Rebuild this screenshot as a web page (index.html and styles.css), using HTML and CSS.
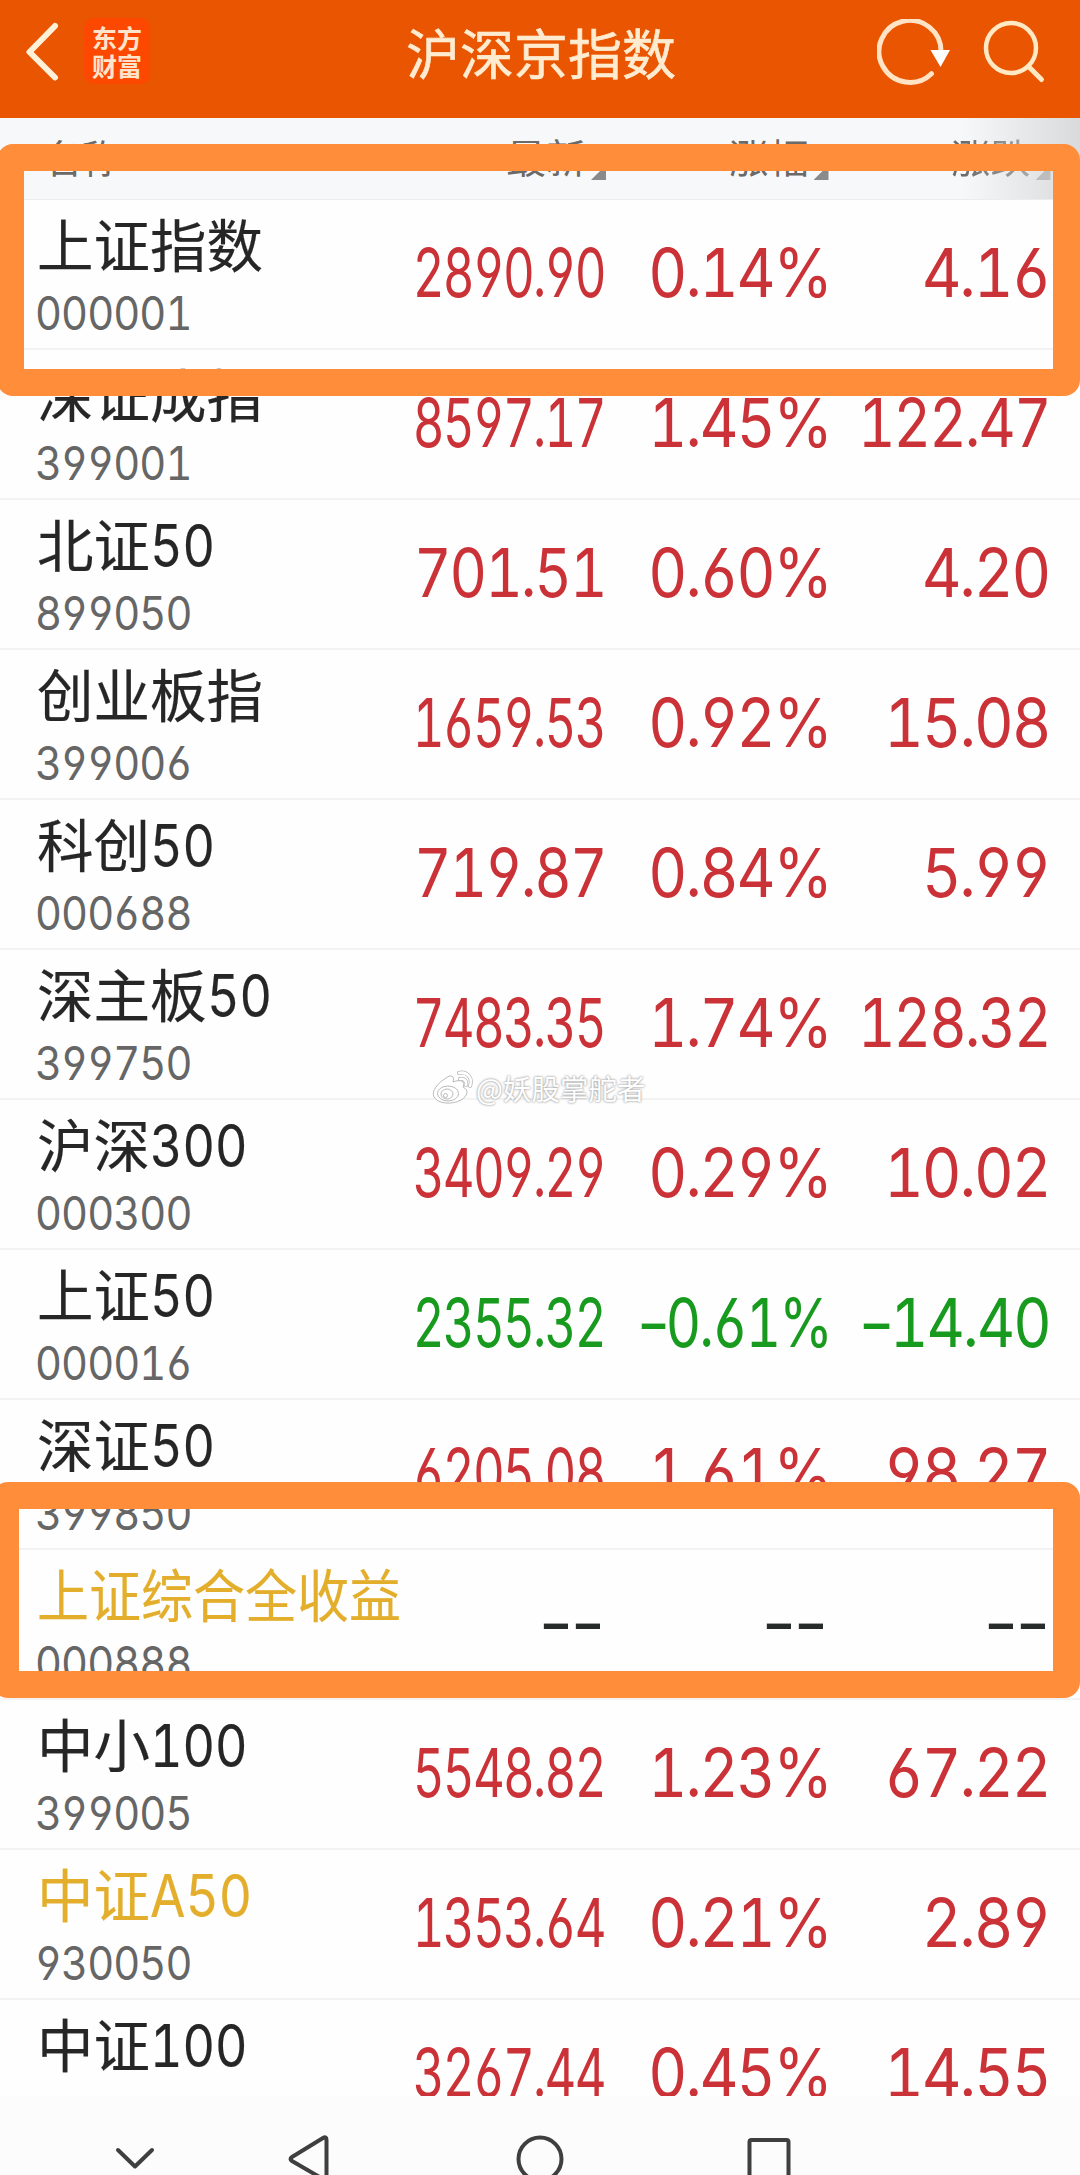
FILE: index.html
```html
<!DOCTYPE html>
<html lang="zh-CN">
<head>
<meta charset="utf-8">
<title>沪深京指数</title>
<link rel="stylesheet" href="styles.css">
</head>
<body>
<div class="screen">
  <header class="topbar">
    <svg class="back" width="36" height="62" viewBox="0 0 36 62"><path d="M31 5L5.500 31L31 56.500" fill="none" stroke="#fff0d8" stroke-width="6" stroke-linecap="round" stroke-linejoin="round"/></svg>
    <div class="logo"><span>东方</span><span>财富</span></div>
    <h1 class="title">沪深京指数</h1>
    <svg class="refresh" width="76" height="70" viewBox="0 0 76 70"><path d="M54.500 54.700A31 31 0 1 1 64 33" fill="none" stroke="#ffe3c4" stroke-width="5" stroke-linecap="round"/><path d="M53.500 31H73L63.500 48Z" fill="#fff"/></svg>
    <svg class="search" width="64" height="66" viewBox="0 0 64 66"><circle cx="29" cy="30" r="25" fill="none" stroke="#ffe8c4" stroke-width="4.500"/><path d="M47 49L59.500 61.500" stroke="#ffe8c4" stroke-width="5" stroke-linecap="round"/></svg>
  </header>
  <div class="heads row-grid">
    <span class="head-name">名称</span>
    <span class="head">最新<i class="sort"></i></span>
    <span class="head">涨幅<i class="sort"></i></span>
    <span class="head">涨跌<i class="sort"></i></span>
  </div>
  <main class="list">
    <div class="row row-grid"><div class="id"><div class="name">上证指数</div><div class="code">000001</div></div><span class="num s7">2890.90</span><span class="num s5">0.14%</span><span class="num">4.16</span></div>
    <div class="row row-grid"><div class="id"><div class="name">深证成指</div><div class="code">399001</div></div><span class="num s7">8597.17</span><span class="num s5">1.45%</span><span class="num s6">122.47</span></div>
    <div class="row row-grid"><div class="id"><div class="name">北证<b>50</b></div><div class="code">899050</div></div><span class="num s6">701.51</span><span class="num s5">0.60%</span><span class="num">4.20</span></div>
    <div class="row row-grid"><div class="id"><div class="name">创业板指</div><div class="code">399006</div></div><span class="num s7">1659.53</span><span class="num s5">0.92%</span><span class="num">15.08</span></div>
    <div class="row row-grid"><div class="id"><div class="name">科创<b>50</b></div><div class="code">000688</div></div><span class="num s6">719.87</span><span class="num s5">0.84%</span><span class="num">5.99</span></div>
    <div class="row row-grid"><div class="id"><div class="name">深主板<b>50</b></div><div class="code">399750</div></div><span class="num s7">7483.35</span><span class="num s5">1.74%</span><span class="num s6">128.32</span></div>
    <div class="row row-grid"><div class="id"><div class="name">沪深<b>300</b></div><div class="code">000300</div></div><span class="num s7">3409.29</span><span class="num s5">0.29%</span><span class="num">10.02</span></div>
    <div class="row row-grid down"><div class="id"><div class="name">上证<b>50</b></div><div class="code">000016</div></div><span class="num s7">2355.32</span><span class="num sp"><em class="minus">-</em>0.61%</span><span class="num sm"><em class="minus">-</em>14.40</span></div>
    <div class="row row-grid"><div class="id"><div class="name">深证<b>50</b></div><div class="code">399850</div></div><span class="num s7">6205.08</span><span class="num s5">1.61%</span><span class="num">98.27</span></div>
    <div class="row row-grid none"><div class="id"><div class="name held tight">上证综合全收益</div><div class="code">000888</div></div><span class="num">--</span><span class="num">--</span><span class="num">--</span></div>
    <div class="row row-grid"><div class="id"><div class="name">中小<b>100</b></div><div class="code">399005</div></div><span class="num s7">5548.82</span><span class="num s5">1.23%</span><span class="num">67.22</span></div>
    <div class="row row-grid"><div class="id"><div class="name held">中证<b>A50</b></div><div class="code">930050</div></div><span class="num s7">1353.64</span><span class="num s5">0.21%</span><span class="num">2.89</span></div>
    <div class="row row-grid"><div class="id"><div class="name">中证<b>100</b></div></div><span class="num s7">3267.44</span><span class="num s5">0.45%</span><span class="num">14.55</span></div>
  </main>
  <nav class="sysnav">
    <svg width="1080" height="79" viewBox="0 0 1080 79" fill="none" stroke="#3f3f3f" stroke-width="4" stroke-linecap="round" stroke-linejoin="round"><path d="M118 54L135 70.500L152 54"/><path d="M323 42Q326.500 40 326.500 44V81Q326.500 85 323 83L292 65Q289 63 292 61Z"/><circle cx="540" cy="63" r="21.500"/><rect x="749.500" y="44" width="39" height="42" rx="2"/></svg>
  </nav>
  <div class="frame frame-a"></div>
  <div class="frame frame-b"></div>
  <div class="watermark">
    <svg width="42" height="36" viewBox="0 0 42 36"><g fill="#fff" stroke="#b9b9b9" stroke-width="1"><path d="M14 8C19 4 23 6 21 12C28 9 34 11 31 17C37 20 36 26 29 30C20 35 6 34 2 27C-1 21 6 13 14 8Z"/><ellipse cx="16" cy="23.500" rx="10.500" ry="7.500"/><ellipse cx="15" cy="24" rx="6" ry="5"/><circle cx="13.500" cy="25.500" r="2"/></g><path d="M27 3C35 1 41 8 38 16M28 9C32 8 35 11 34 15" fill="none" stroke="#b9b9b9" stroke-width="4" stroke-linecap="round"/><path d="M27 3C35 1 41 8 38 16M28 9C32 8 35 11 34 15" fill="none" stroke="#fff" stroke-width="2.600" stroke-linecap="round"/></svg>
    <span>@妖股掌舵者</span>
  </div>
</div>
</body>
</html>
```
FILE: styles.css
```css
* { box-sizing: border-box; }
body { margin: 0; background: #fdfdfd; font-family: "Noto Sans CJK SC", sans-serif; }
.screen { position: relative; width: 1080px; height: 2175px; overflow: hidden; display: flex; flex-direction: column; }

.topbar { height: 118px; flex: none; background: #e95500; display: grid; grid-template-columns: 84px 66px 1fr 76px 64px; align-items: start; padding-right: 30px; }
.back { margin: 21px 0 0 24px; }
.logo { width: 66px; height: 66px; margin-top: 18px; border-radius: 10px; background: #fc4800; color: #ffe4cc; display: flex; flex-direction: column; align-items: center; justify-content: center; font-size: 25px; font-weight: 700; line-height: 28px; }
.title { margin: 0 0 0 256px; font-size: 54px; font-weight: 400; line-height: 103px; color: #ffecd0; -webkit-text-stroke: .6px #ffecd0; white-space: nowrap; }
.refresh { margin: 19px 0 0 -33px; }
.search { margin: 18px 0 0 -4px; }

.row-grid { display: grid; grid-template-columns: 370px 199px 222.500px 222px; padding-left: 37px; }
.heads { height: 82px; flex: none; background: linear-gradient(90deg, rgba(216,218,220,0) 89%, #d8dadc 100%), #f6f8fa; border-bottom: 1px solid #ececec; color: #6b6a68; font-size: 40px; line-height: 77px; }
.head-name { padding-left: 6px; font-size: 39px; letter-spacing: -1px; }
.head { display: flex; justify-content: flex-end; }
.head:last-child { color: transparent; background: linear-gradient(90deg, #6b6a68 60%, #b0b0b0 95%); -webkit-background-clip: text; background-clip: text; }
.sort { width: 15px; height: 15px; margin: 47px 0 0 5px; background: #8a8a8a; clip-path: polygon(100% 0, 100% 100%, 0 100%); }
.head:last-child .sort { background: #bdbdbd; }

.list { height: 1896px; flex: none; overflow: hidden; background: #fefefe; }
.row { height: 150px; border-bottom: 2px solid #f3f3f3; color: #cb3237; }
.id { padding-top: 7px; }
.name { height: 70px; font-size: 56.500px; line-height: 71px; color: #262626; -webkit-text-stroke: .2px; white-space: nowrap; transform-origin: left; }
.name b { display: inline-block; font: 400 59px/70px Inter, sans-serif; font-feature-settings: "tnum", "cv03", "cv04"; transform: scaleX(.85); transform-origin: left; }
.held b { transform: scaleX(.87); }
.tight { transform: scaleX(.92); }
.held { color: #e3ae2b; }
.code { width: 200px; font: 46px/48px Inter, sans-serif; font-feature-settings: "tnum", "cv03", "cv04"; letter-spacing: -1px; color: #666; transform: translateX(-2px) scaleX(.905); transform-origin: left; margin-top: 12px; }
.num { justify-self: end; font: 67px/80px Inter, sans-serif; font-feature-settings: "tnum", "cv03", "cv04"; letter-spacing: -2.300px; padding: 33px 1px 0 0; white-space: nowrap; transform: scaleX(.917); transform-origin: right; }
.s7 { transform: scaleX(.732); }
.s6 { transform: scaleX(.865); }
.s5 { transform: translateX(3px) scaleX(.9); }
.sp { transform: translateX(3px) scaleX(.815); }
.sm { transform: scaleX(.885); }
.minus { display: inline-block; font-style: normal; transform: scaleX(1.35); margin-right: -4px; }
.down { color: #189a1e; }
.none { color: #272b2a; }
.none .num { letter-spacing: -15px; transform: translateX(-9px) scaleX(1.13); }

.sysnav { height: 79px; flex: none; background: #fcfcfc; }
.sysnav svg { display: block; }

.frame { position: absolute; border: 27px solid #ff8d3a; border-radius: 16px; }
.frame-a { left: -3px; top: 144px; width: 1083px; height: 252px; }
.frame-b { left: -8px; top: 1482px; width: 1088px; height: 216px; }
.watermark { position: absolute; left: 432px; top: 1069px; display: flex; align-items: center; font-size: 28.500px; line-height: 38px; color: #fff; text-shadow: 0 0 2px #999, 0 0 3px #bbb; white-space: nowrap; }
.watermark span { margin-left: 2px; }
```
